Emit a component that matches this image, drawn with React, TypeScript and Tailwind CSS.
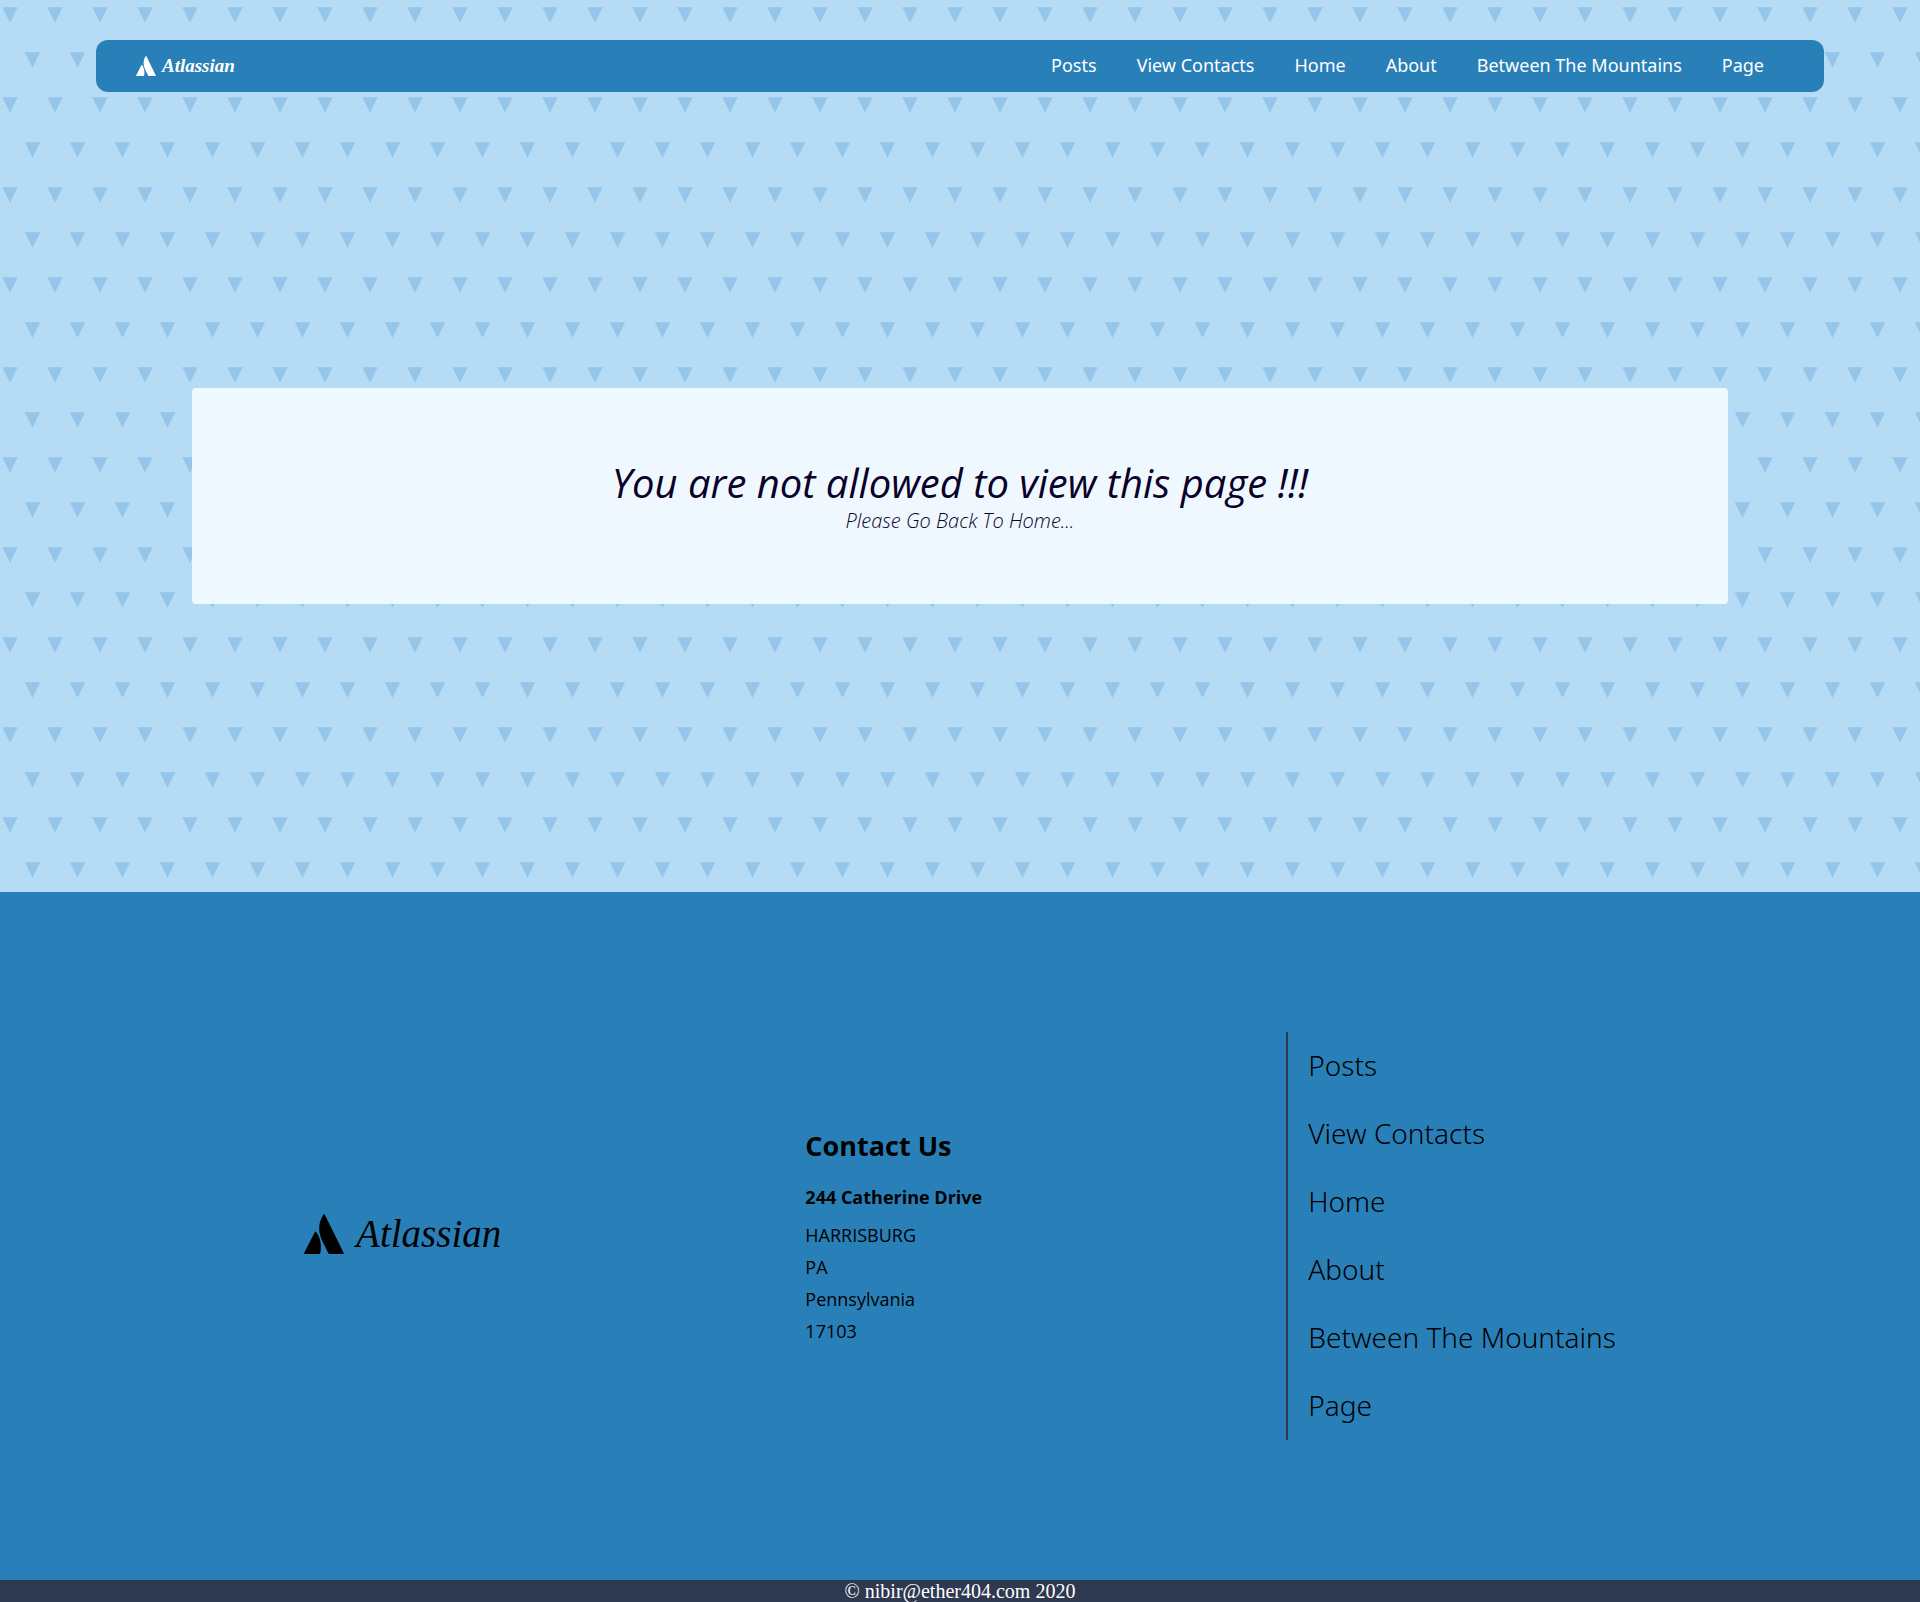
const links = ["Posts", "View Contacts", "Home", "About", "Between The Mountains", "Page"];
const addressLines = ["HARRISBURG", "PA", "Pennsylvania", "17103"];

function LogoMark({ className }: { className: string }) {
  return (
    <svg viewBox="0 0 24 24" fill="currentColor" aria-hidden="true" className={className}>
      <path d="M6.6 10.7L0 23.6Q0 24 .4 24H9.1Q9.6 23.9 9.8 23.4C10.6 18.8 10 14.3 7.3 10.8Q6.9 10.3 6.6 10.7zM11.6.4C8.6 4.8 8.3 10.4 10.7 15.6L14.6 23.6Q14.8 24 15.3 24H23.6Q24 24 23.9 23.6L12.5.4Q12 -.3 11.6.4z" />
    </svg>
  );
}

function TrianglePattern() {
  return (
    <svg aria-hidden="true" className="absolute inset-0 -z-10 h-full w-full">
      <defs>
        <pattern id="triangles" width="45" height="90" patternUnits="userSpaceOnUse">
          <path d="M2.3 7.2h15.4l-7.7 15.6zM24.8 52.2h15.4l-7.7 15.6z" fill="#95c5e8" />
        </pattern>
      </defs>
      <rect width="100%" height="100%" fill="url(#triangles)" />
    </svg>
  );
}

export default function App() {
  return (
    <div className="font-['Open_Sans',sans-serif] text-black">
      <div className="relative isolate bg-[#b5dbf5] pt-10 pb-[288px]">
        <TrianglePattern />
        <header className="mx-[5%] flex h-[52px] items-center justify-between rounded-xl bg-[#2980b9] pr-[60px] pl-10 text-white">
          <a href="#" className="flex items-center gap-1.5">
            <LogoMark className="size-5" />
            <span className="font-['Liberation_Serif',serif] text-[19px] font-bold italic">Atlassian</span>
          </a>
          <nav className="flex gap-10 pb-0.5 font-['Noto_Sans',sans-serif] text-[18px]">
            {links.map((label) => (
              <a key={label} href="#">
                {label}
              </a>
            ))}
          </nav>
        </header>
        <main className="mx-[10%] mt-[296px] rounded bg-[#f0f8ff] pt-[71px] pb-[69px] text-center text-[#0b0129] italic">
          <h1 className="text-[40px] leading-[48px]">You are not allowed to view this page !!!</h1>
          <p className="text-xl leading-7 font-light">Please Go Back To Home...</p>
        </main>
      </div>
      <footer>
        <div className="flex items-center justify-evenly bg-[#2980b9] py-[140px]">
          <a href="#" className="flex items-center gap-3 pb-1">
            <LogoMark className="size-10" />
            <span className="font-['Liberation_Serif',serif] text-[39px] leading-10 italic">Atlassian</span>
          </a>
          <address className="pb-1 not-italic">
            <h2 className="mb-2 text-[27px] leading-[50px] font-bold">Contact Us</h2>
            <p className="mb-1 text-[18px] leading-9 font-bold">244 Catherine Drive</p>
            {addressLines.map((line) => (
              <p key={line} className="text-[18px] leading-8">
                {line}
              </p>
            ))}
          </address>
          <ul className="border-l-2 border-[#2e384f] pl-5">
            {links.map((label) => (
              <li key={label} className="pb-0.5 font-['Noto_Sans',sans-serif] text-[28px] leading-[66px] font-light">
                <a href="#">{label}</a>
              </li>
            ))}
          </ul>
        </div>
        <p className="bg-[#2e384f] text-center font-['Liberation_Serif',serif] text-xl leading-[22px] text-white">
          © nibir@ether404.com 2020
        </p>
      </footer>
    </div>
  );
}
